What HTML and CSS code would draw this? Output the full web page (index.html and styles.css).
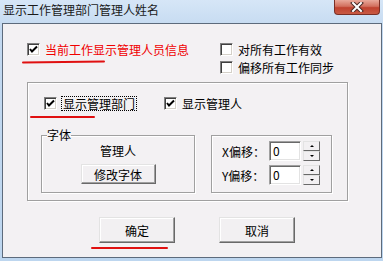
FILE: index.html
```html
<!DOCTYPE html>
<html lang="zh-CN">
<head>
<meta charset="UTF-8" />
<title>显示工作管理部门管理人姓名</title>
<link rel="stylesheet" href="styles.css">
</head>
<body>
  <div class="window">
    <div class="titlebar">
      <span class="title">显示工作管理部门管理人姓名</span>
      <span class="close">
        <svg width="14" height="10" viewBox="0 0 14 10">
          <path d="M3 1 L11 9 M11 1 L3 9" stroke="#4a2a26" stroke-width="4" stroke-linecap="square"/>
          <path d="M3 1 L11 9 M11 1 L3 9" stroke="#ffffff" stroke-width="2" stroke-linecap="square"/>
        </svg>
      </span>
    </div>

    <div class="client">
      <div class="top">
        <label class="check main mark">
          <span class="box"><svg width="9" height="9" viewBox="0 0 9 9"><path d="M1 4 L3 6.5 L8 1.5" stroke="#000" stroke-width="2" fill="none"/></svg></span>
          <span class="red">当前工作显示管理人员信息</span>
        </label>
        <div class="options">
          <label class="check"><span class="box"></span>对所有工作有效</label>
          <label class="check"><span class="box"></span>偏移所有工作同步</label>
        </div>
      </div>

      <div class="group">
        <div class="row">
          <label class="check dept mark">
            <span class="box"><svg width="9" height="9" viewBox="0 0 9 9"><path d="M1 4 L3 6.5 L8 1.5" stroke="#000" stroke-width="2" fill="none"/></svg></span>
            <span class="focus">显示管理部门</span>
          </label>
          <label class="check">
            <span class="box"><svg width="9" height="9" viewBox="0 0 9 9"><path d="M1 4 L3 6.5 L8 1.5" stroke="#000" stroke-width="2" fill="none"/></svg></span>
            显示管理人
          </label>
        </div>

        <div class="subs">
          <fieldset class="font-box">
            <legend>字体</legend>
            <div class="sample">管理人</div>
            <button class="btn font-btn">修改字体</button>
          </fieldset>

          <div class="offset-box">
            <div class="offset-row">
              <span class="offset-label">X偏移：</span>
              <span class="edit">0</span>
              <span class="spin"><span class="arrow up"></span><span class="arrow down"></span></span>
            </div>
            <div class="offset-row">
              <span class="offset-label">Y偏移：</span>
              <span class="edit">0</span>
              <span class="spin"><span class="arrow up"></span><span class="arrow down"></span></span>
            </div>
          </div>
        </div>
      </div>

      <div class="actions">
        <button class="btn action ok mark">确定</button>
        <button class="btn action">取消</button>
      </div>
    </div>
  </div>
</body>
</html>
```

FILE: styles.css
```css
* {
  box-sizing: border-box;
}
body {
  margin: 0;
  font-family: "Noto Sans CJK SC", "Liberation Sans", sans-serif;
  font-size: 12px;
  color: #000;
}
.window {
  width: 383px;
  height: 261px;
  display: flex;
  flex-direction: column;
  background: linear-gradient(#d6e6f7, #c3d9f0 30px, #bdd6ef);
}
.titlebar {
  height: 23px;
  display: flex;
  justify-content: space-between;
  align-items: flex-start;
}
.title {
  padding: 3px 0 0 3px;
  line-height: 14px;
  color: #1a1a1a;
}
.close {
  width: 46px;
  height: 15px;
  margin-right: 3px;
  border: 1px solid #7a2f26;
  border-top: none;
  border-radius: 0 0 4px 4px;
  background: linear-gradient(#e9a99b, #d2705e 45%, #c0422f 55%, #c85a44);
  display: flex;
  align-items: center;
  justify-content: center;
}
.client {
  height: 235px;
  margin: 0 1px 0 2px;
  border: 1px solid #5d6b7c;
  background: #f3f1f3;
}

/* checkboxes */
.check {
  display: flex;
  align-items: center;
  height: 18px;
  gap: 5px;
  white-space: nowrap;
  position: relative;
}
.box {
  width: 13px;
  height: 13px;
  flex: none;
  background: #fff;
  border: 1px solid;
  border-color: #808080 #fff #fff #808080;
  box-shadow: inset 1px 1px 0 #404040, inset -1px -1px 0 #d4d0c8;
  display: flex;
  align-items: center;
  justify-content: center;
}
.top {
  display: flex;
  padding: 16px 0 0 24px;
}
.main {
  width: 193px;
}
.red {
  color: #f00000;
}
.mark::after {
  content: "";
  position: absolute;
  height: 2px;
  background: #e01010;
  border-radius: 1px;
}
.main::after {
  left: -5px;
  top: 21px;
  width: 83px;
  transform: rotate(-0.8deg);
}
.dept::after {
  left: -14px;
  top: 22px;
  width: 65px;
}
.ok::after {
  left: -9px;
  top: 29px;
  width: 77px;
}

/* outer group */
.group {
  margin: 6px 0 0 24px;
  width: 321px;
  height: 119px;
  border: 1px solid #a0a0a0;
  box-shadow: 1px 1px 0 #fff, inset 1px 1px 0 #fff;
  padding: 11px 0 0 16px;
}
.row {
  display: flex;
}
.dept {
  width: 120px;
  gap: 4px;
}
.focus {
  border: 1px dotted #000;
  padding: 0 1px;
  line-height: 13px;
}
.subs {
  display: flex;
  align-items: flex-start;
  margin: 16px 0 0 -3px;
}
.font-box {
  width: 154px;
  height: 65px;
  margin: 0;
  padding: 0;
  border: 1px solid #a0a0a0;
  box-shadow: 1px 1px 0 #fff, inset 1px 1px 0 #fff;
  display: flex;
  flex-direction: column;
  align-items: center;
}
.font-box legend {
  margin-left: 5px;
  padding: 0;
  line-height: 14px;
}
.sample {
  margin-top: 2px;
  line-height: 14px;
}

/* buttons */
.btn {
  font-family: inherit;
  font-size: 12px;
  color: #000;
  background: #f2f0f2;
  border: 1px solid;
  border-color: #e3e3e3 #696969 #696969 #e3e3e3;
  box-shadow: inset -1px -1px 0 #a0a0a0, inset 1px 1px 0 #fff;
  padding: 0;
  border-radius: 0;
}
.font-btn {
  width: 75px;
  height: 20px;
  margin-top: 6px;
}

/* offset box */
.offset-box {
  width: 121px;
  height: 58px;
  margin: 7px 0 0 16px;
  border: 1px solid #a0a0a0;
  box-shadow: 1px 1px 0 #fff, inset 1px 1px 0 #fff;
  padding: 5px 0 0 10px;
  display: flex;
  flex-direction: column;
  gap: 4px;
}
.offset-row {
  display: flex;
  align-items: center;
  height: 20px;
}
.offset-label {
  width: 47px;
}
.edit {
  width: 32px;
  height: 20px;
  background: #fff;
  border: 1px solid;
  border-color: #a0a0a0 #fff #fff #a0a0a0;
  box-shadow: inset 1px 1px 0 #696969, inset -1px -1px 0 #e3e3e3;
  padding: 2px 0 0 3px;
  line-height: 14px;
}
.spin {
  width: 17px;
  height: 20px;
  margin-left: 2px;
  display: flex;
  flex-direction: column;
}
.arrow {
  flex: 1;
  background: #f2f0f2;
  border: 1px solid;
  border-color: #e3e3e3 #696969 #696969 #e3e3e3;
  position: relative;
}
.arrow::before {
  content: "";
  position: absolute;
  left: 50%;
  top: 50%;
  margin: -1px 0 0 -2px;
  border-left: 2px solid transparent;
  border-right: 2px solid transparent;
}
.up::before {
  border-bottom: 2px solid #000;
}
.down::before {
  border-top: 2px solid #000;
}

.actions {
  display: flex;
  gap: 44px;
  margin-top: 16px;
  padding-left: 96px;
}
.action {
  width: 76px;
  height: 26px;
  position: relative;
}
```
